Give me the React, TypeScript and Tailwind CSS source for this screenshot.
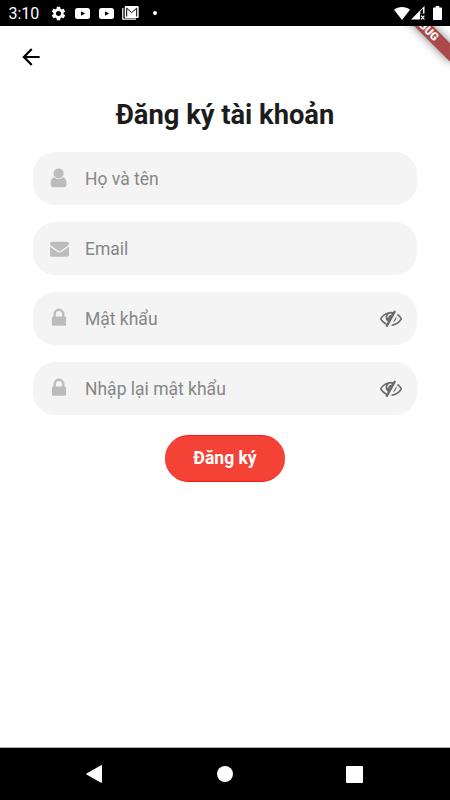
import type { ReactNode } from 'react';
import { MdArrowBack, MdSettings } from 'react-icons/md';

interface Field {
  id: string;
  label: string;
  icon: ReactNode;
  secret?: boolean;
}

function UserIcon() {
  return (
    <svg viewBox="0 0 22 22" className="size-[22px]" fill="currentColor">
      <circle cx="10.6" cy="6.4" r="5" />
      <path d="M6.600 10.600Q8.200 12.300 10.600 12.300T14.600 10.600C17.500 10.600 18.500 13 18.500 17.300Q18.500 20.300 16 20.300H5.200Q2.700 20.300 2.700 17.300C2.700 13 3.700 10.600 6.600 10.600z" />
    </svg>
  );
}

function EnvelopeIcon() {
  return (
    <svg viewBox="0 0 1792 1792" className="size-[19px]" fill="currentColor">
      <path d="M1792 710v794q0 66-47 113t-113 47h-1472q-66 0-113-47t-47-113v-794q44 49 101 87 362 246 497 345 57 42 92.5 65.5t94.5 48 110 24.5h2q51 0 110-24.5t94.5-48 92.5-65.5q170-123 498-345 57-39 100-87zm0-294q0 79-49 151t-122 123q-376 261-468 325-10 7-42.5 31t-54 38.8-52 33.2-57.5 27-50 9h-2q-23 0-50-9t-57.5-27-52-33.2-54-38.8-42.5-31q-91-64-262-182.5t-205-142.5q-62-42-117-115.5t-55-136.5q0-78 41.5-130t118.5-52h1472q65 0 112.5 47t47.5 113z" />
    </svg>
  );
}

function LockIcon() {
  return (
    <svg viewBox="0 0 1792 1792" className="size-[22px]" fill="currentColor">
      <path d="M640 768h512v-192q0-106-75-181t-181-75-181 75-75 181v192zm832 96v576q0 40-28 68t-68 28h-960q-40 0-68-28t-28-68v-576q0-40 28-68t68-28h32v-192q0-184 132-316t316-132 316 132 132 316v192h32q40 0 68 28t28 68z" />
    </svg>
  );
}

function EyeSlashIcon() {
  return (
    <svg viewBox="0 0 1792 1792" className="size-[22px]" fill="currentColor">
      <path d="M555 1335l78-141q-87-63-136-159t-49-203q0-121 61-225-229 117-381 353 167 258 427 375zm389-759q0-20-14-34t-34-14q-125 0-214.5 89.5t-89.5 214.5q0 20 14 34t34 14 34-14 14-34q0-86 61-147t147-61q20 0 34-14t14-34zm363-191q0 7-1 9-106 189-316 567t-315 566l-49 89q-10 16-28 16-12 0-134-70-16-10-16-28 0-12 44-87-143-65-263.5-173t-208.5-245q-20-31-20-69t20-69q153-235 380-371t496-136q89 0 180 17l54-97q10-16 28-16 5 0 18 6t31 15.5 33 18.5 31.5 18.5 19.5 11.5q16 10 16 27zm37 447q0 139-79 253.5t-209 164.5l280-502q8 45 8 84zm448 128q0 35-20 69-39 64-109 145-150 172-347.5 267t-419.5 95l74-132q212-18 392.5-137t301.5-307q-115-179-282-294l63-112q95 64 182.5 153t144.5 184q20 34 20 69z" />
    </svg>
  );
}

function YoutubeIcon() {
  return (
    <svg viewBox="0 0 15 11" className="w-[15px] h-[11px]">
      <rect width="15" height="11" rx="2.5" fill="#fff" />
      <path d="M6 3.2v4.6l4-2.3z" fill="#000" />
    </svg>
  );
}

function MailIcon() {
  return (
    <svg viewBox="0 0 17 14" className="w-[17px] h-[14px]" fill="none">
      <path d="M.8 2v11.200h13.200" stroke="#fff" strokeWidth="1.2" />
      <rect x="2.700" width="14" height="12" rx="1" fill="#fff" />
      <path d="M4.700 10.500V2.200l5 4.400 5-4.400v8.300" stroke="#000" strokeWidth="1" />
    </svg>
  );
}

const fields: Field[] = [
  { id: 'name', label: 'Họ và tên', icon: <UserIcon /> },
  { id: 'email', label: 'Email', icon: <EnvelopeIcon /> },
  { id: 'password', label: 'Mật khẩu', icon: <LockIcon />, secret: true },
  { id: 'confirm', label: 'Nhập lại mật khẩu', icon: <LockIcon />, secret: true },
];

function StatusBar() {
  return (
    <div className="relative z-10 flex h-[26px] shrink-0 items-center bg-black pl-[8.500px] pr-2 text-white">
      <span className="w-[41.500px] pt-[2px] text-[16px] leading-[26px]">3:10</span>
      <MdSettings className="size-[17px]" />
      <div className="ml-2 flex items-center gap-[9px]">
        <YoutubeIcon />
        <YoutubeIcon />
      </div>
      <div className="ml-2">
        <MailIcon />
      </div>
      <div className="ml-[13.500px] size-1 rounded-full bg-white" />
      <div className="ml-auto flex items-center">
        <svg viewBox="0 0 16 13" className="w-4 h-[13px]" fill="#fff">
          <path d="M8 13L0 2.8C2.2 1 5 0 8 0s5.800 1 8 2.800z" />
        </svg>
        <svg viewBox="0 0 15 14" className="ml-[1px] w-[15px] h-[14px]">
          <path d="M0 13.500L13.500 0v7.500H9v6z" fill="#fff" />
          <path d="M9.300 5.500L12 2.800v4.700H9.300z" fill="#000" />
          <path d="M10 9.700l3.400 3.600M13.400 9.700L10 13.300" stroke="#fff" strokeWidth="1.200" />
        </svg>
        <svg viewBox="0 0 9 14" className="ml-[7px] w-[9px] h-[14px]" fill="#fff">
          <path d="M2.700 0h3.600v1.500H8.200a.8.8 0 0 1 .8.800v10.900a.8.8 0 0 1-.8.800H.8a.8.8 0 0 1-.8-.8V2.300a.8.8 0 0 1 .8-.8h1.900z" />
        </svg>
      </div>
    </div>
  );
}

function DebugBanner() {
  return (
    <div className="pointer-events-none absolute left-[380px] top-[20px] h-[13px] w-[88px] rotate-45 bg-[#ab4a4a] text-center text-[11.200px] font-black leading-[13px] text-white shadow-[0_0_10px_rgba(0,0,0,0.5)]">
      DEBUG
    </div>
  );
}

function NavigationBar() {
  return (
    <div className="flex h-[53px] shrink-0 items-center justify-between border-t border-[#aaa] bg-black pl-[86px] pr-[87px]">
      <svg viewBox="0 0 17 18" className="w-[17px] h-[18px]" fill="#fff">
        <path d="M.6 8.500L15 .2q1-.4 1 .7v16.200q0 1.100-1 .7L.6 9.500q-.7-.5 0-1z" />
      </svg>
      <div className="ml-px size-4 rounded-full bg-white" />
      <div className="size-[17px] rounded-[1px] bg-white" />
    </div>
  );
}

export default function App() {
  return (
    <div className="relative flex h-[800px] w-[450px] flex-col overflow-hidden bg-white font-['Roboto',sans-serif]">
      <StatusBar />
      <DebugBanner />

      <main className="flex flex-1 flex-col">
        <button className="ml-[17.500px] mt-[18px] size-[26px] text-black">
          <MdArrowBack className="size-[26px]" />
        </button>

        <h1 className="mt-[27px] text-center text-[27.300px] font-bold leading-9 text-[#1c1c1c]">
          Đăng ký tài khoản
        </h1>

        <form className="mt-[19px] flex flex-col items-center">
          <div className="flex flex-col gap-[17.500px]">
            {fields.map((field) => (
              <label
                key={field.id}
                className="flex h-[52.500px] w-[384px] items-center rounded-[22px] bg-[#f4f4f4] px-[15px]"
              >
                <span className="flex w-[22px] justify-center text-[#bcbcbc]">{field.icon}</span>
                <span className="ml-[15px] flex-1 pt-[2px] text-[17.500px] text-[#868686]">{field.label}</span>
                {field.secret && (
                  <span className="text-[#6b6b6b]">
                    <EyeSlashIcon />
                  </span>
                )}
              </label>
            ))}
          </div>

          <button
            type="button"
            className="mt-5 h-[47px] w-[120px] rounded-full border-y border-[#fb1a12] bg-[#f44336] text-[17.500px] font-bold text-white"
          >
            Đăng ký
          </button>
        </form>
      </main>

      <NavigationBar />
    </div>
  );
}
